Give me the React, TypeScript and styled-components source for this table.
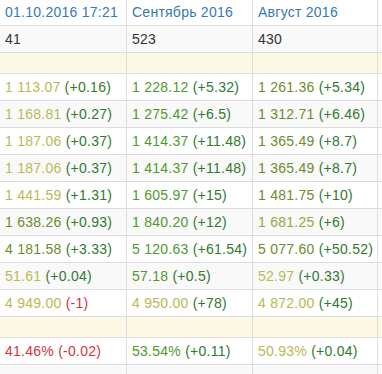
import React from "react";
import styled, { createGlobalStyle } from "styled-components";

const Global = createGlobalStyle`
  html, body { margin: 0; padding: 0; background: #fff; overflow: hidden; }
  body { font-family: "Liberation Sans", Arial, sans-serif; font-size: 14px; color: #333; }
`;

const Table = styled.div`
  display: flex;
  flex-direction: column;
  width: 382px;
`;

type Kind = "head" | "plain" | "striped" | "warn";

const Row = styled.div<{ $kind: Kind }>`
  display: grid;
  grid-template-columns: 127px 126px 125px 1fr;
  border-bottom: 1px solid #ddd;
  background: ${(p) =>
    p.$kind === "striped" ? "#f9f9f9" : p.$kind === "warn" ? "#fcf8e3" : "#fff"};
  height: ${(p) => (p.$kind === "head" ? "25px" : p.$kind === "warn" ? "20px" : "26px")};
`;

const Cell = styled.div<{ $head?: boolean }>`
  box-sizing: border-box;
  border-right: 1px solid #ddd;
  padding: 0 5px;
  line-height: ${(p) => (p.$head ? "25px" : "26px")};
  letter-spacing: 0.25px;
  white-space: nowrap;
  overflow: hidden;
  color: ${(p) => (p.$head ? "#337ab7" : "#333")};
`;

const Val = styled.span<{ $c: string }>`
  color: ${(p) => p.$c};
`;

const Y = "#b9b953";
const G = "#4f9a2c";
const O = "#6b8d2c";
const D = "#2e7a2e";
const R = "#d6343c";

type V = [string, string, string, string];

const data: V[][] = [
  [["1 113.07", Y, "(+0.16)", D], ["1 228.12", G, "(+5.32)", D], ["1 261.36", O, "(+5.34)", D]],
  [["1 168.81", Y, "(+0.27)", D], ["1 275.42", G, "(+6.5)", D], ["1 312.71", O, "(+6.46)", D]],
  [["1 187.06", Y, "(+0.37)", D], ["1 414.37", G, "(+11.48)", D], ["1 365.49", O, "(+8.7)", D]],
  [["1 187.06", Y, "(+0.37)", D], ["1 414.37", G, "(+11.48)", D], ["1 365.49", O, "(+8.7)", D]],
  [["1 441.59", Y, "(+1.31)", D], ["1 605.97", G, "(+15)", D], ["1 481.75", O, "(+10)", D]],
  [["1 638.26", O, "(+0.93)", D], ["1 840.20", G, "(+12)", D], ["1 681.25", "#9ea43a", "(+6)", D]],
  [["4 181.58", O, "(+3.33)", D], ["5 120.63", G, "(+61.54)", D], ["5 077.60", O, "(+50.52)", D]],
  [["51.61", Y, "(+0.04)", D], ["57.18", G, "(+0.5)", D], ["52.97", Y, "(+0.33)", D]],
  [["4 949.00", Y, "(-1)", R], ["4 950.00", Y, "(+78)", D], ["4 872.00", Y, "(+45)", D]],
];

const pct: V[] = [
  ["41.46%", R, "(-0.02)", R],
  ["53.54%", G, "(+0.11)", D],
  ["50.93%", Y, "(+0.04)", D],
];

const ValueCell = ({ v }: { v: V }) => (
  <Cell>
    <Val $c={v[1]}>{v[0]}</Val> <Val $c={v[3]}>{v[2]}</Val>
  </Cell>
);

export default function App() {
  return (
    <>
      <Global />
      <Table>
        <Row $kind="head">
          <Cell $head>01.10.2016 17:21</Cell>
          <Cell $head>Сентябрь 2016</Cell>
          <Cell $head>Август 2016</Cell>
          <Cell $head />
        </Row>
        <Row $kind="striped">
          <Cell>41</Cell>
          <Cell>523</Cell>
          <Cell>430</Cell>
          <Cell />
        </Row>
        <Row $kind="warn">
          <Cell />
          <Cell />
          <Cell />
          <Cell />
        </Row>
        {data.map((r, i) => (
          <Row key={i} $kind={i % 2 === 1 ? "striped" : "plain"}>
            {r.map((v, j) => (
              <ValueCell key={j} v={v} />
            ))}
            <Cell />
          </Row>
        ))}
        <Row $kind="warn">
          <Cell />
          <Cell />
          <Cell />
          <Cell />
        </Row>
        <Row $kind="plain">
          {pct.map((v, j) => (
            <ValueCell key={j} v={v} />
          ))}
          <Cell />
        </Row>
        <Row $kind="striped">
          <Cell />
          <Cell />
          <Cell />
          <Cell />
        </Row>
      </Table>
    </>
  );
}
